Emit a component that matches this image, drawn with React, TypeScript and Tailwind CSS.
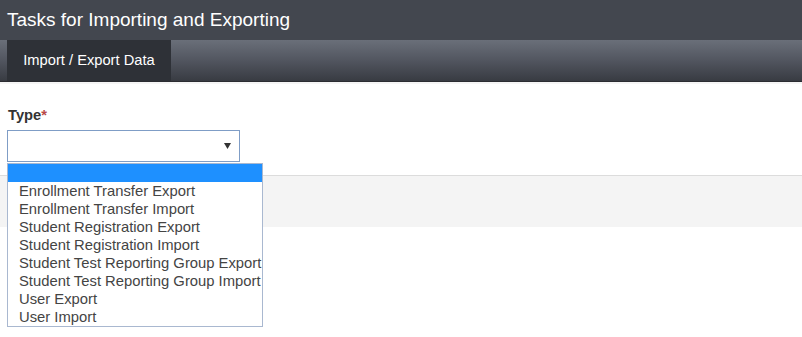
const options = [
  "Enrollment Transfer Export",
  "Enrollment Transfer Import",
  "Student Registration Export",
  "Student Registration Import",
  "Student Test Reporting Group Export",
  "Student Test Reporting Group Import",
  "User Export",
  "User Import",
];

export default function App() {
  return (
    <div className="w-[802px] h-[337px] bg-white overflow-hidden font-['Liberation_Sans',Arial,sans-serif]">
      <div className="h-10 bg-[#43474f] flex items-center px-[7px]">
        <h1 className="text-[19px] text-white">Tasks for Importing and Exporting</h1>
      </div>
      <div className="h-[42px] flex pl-[7px] border-b border-[#2b2c31] bg-[linear-gradient(to_bottom,#6a6f79,#545862_45%,#383b42)]">
        <div className="w-[164px] bg-[#2e3137] flex items-center justify-center text-[14.7px] text-white">
          Import / Export Data
        </div>
      </div>
      <div className="h-[2px] bg-[#f5f5f5]" />

      <div className="relative">
        <div className="px-2 pt-[21px]">
          <label className="block text-[14.7px] font-bold text-[#333] leading-[20px]">
            Type<span className="text-[#b94a48]">*</span>
          </label>
          <div className="mt-[5px] w-[233px] h-[32px] border border-[#7f9dc6] bg-white flex items-center justify-end pr-[8px] -ml-px">
            <svg width="7" height="6" viewBox="0 0 7 6">
              <path d="M0 0h7L3.5 6z" fill="#333" />
            </svg>
          </div>
        </div>

        <div className="mt-[13px] h-[52px] bg-[#f4f4f4] border-t border-[#dcdcdc]" />

        <div className="absolute left-[7px] top-[79px] w-[256px] bg-white border border-[#a9b8d0] text-[14.8px] text-[#444] leading-[18px]">
          <div className="h-[18px] bg-[#1e90ff]" />
          {options.map((o) => (
            <div key={o} className="pl-[11px] whitespace-nowrap">
              {o}
            </div>
          ))}
        </div>
      </div>
    </div>
  );
}
